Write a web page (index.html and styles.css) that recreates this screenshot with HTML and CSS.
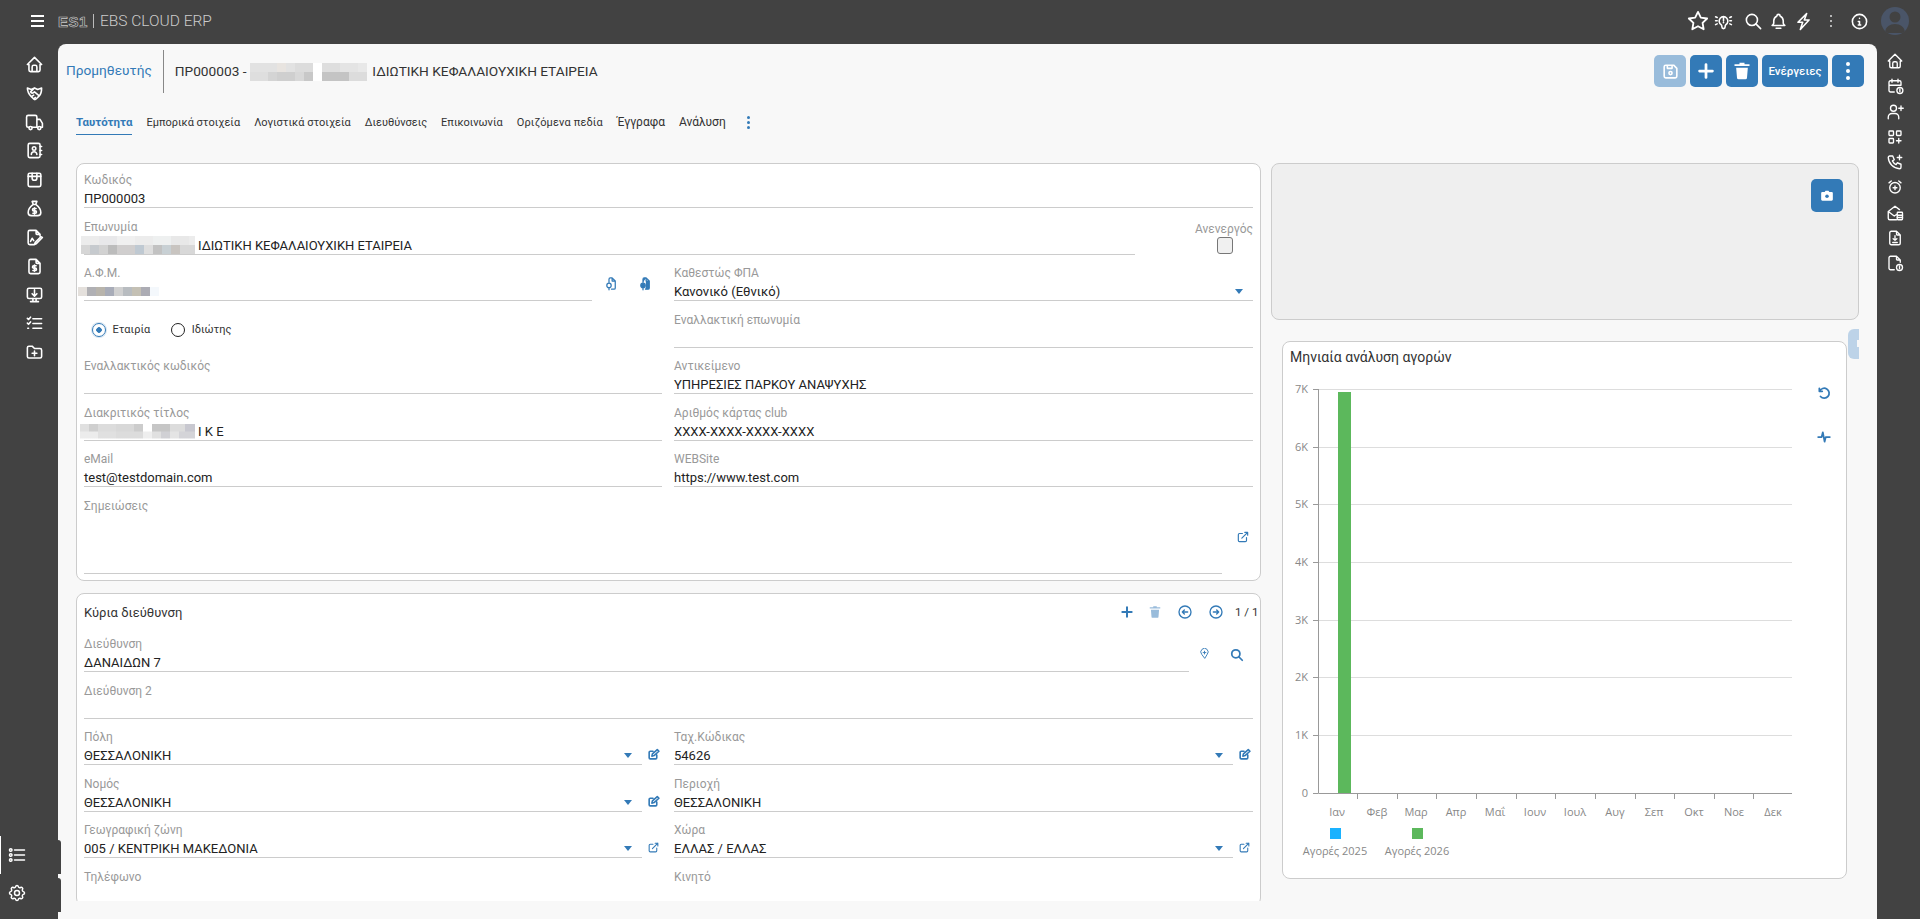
FILE: index.html
```html
<!DOCTYPE html>
<html lang="el">

<head>
    <meta charset="UTF-8">
    <title>Προμηθευτής</title>
    <link rel="stylesheet" href="styles.css">
</head>

<body>
    <svg class="sprite" width="0" height="0">
        <symbol id="i-home" viewBox="0 0 24 24"><path d="M5 12H3l9-9 9 9h-2M5 12v7a2 2 0 0 0 2 2h10a2 2 0 0 0 2-2v-7M9 21v-6a2 2 0 0 1 2-2h2a2 2 0 0 1 2 2v6"/></symbol>
        <symbol id="i-shake" viewBox="0 0 24 24"><path d="M3 5l5 2 4-2 4 2 5-2M3 5c0 5 2 8 5 11l3 3c1 1 2 1 3 0l4-4M12 5L7 10c1 2 3 2 5 0l6 5c2-2 3-5 3-10M8 16l3-2M11 19l2-2"/></symbol>
        <symbol id="i-truck" viewBox="0 0 24 24"><path d="M5 18H4a2 2 0 0 1-2-2V5a2 2 0 0 1 2-2h9a2 2 0 0 1 2 2v13H9M15 8h4l3 5v5h-2M15 18h1"/><circle cx="7" cy="19" r="2"/><circle cx="18" cy="19" r="2"/></symbol>
        <symbol id="i-contact" viewBox="0 0 24 24"><rect x="4" y="3" width="15" height="18" rx="2"/><circle cx="11.5" cy="9.5" r="2.2"/><path d="M8 17a3.5 3.5 0 0 1 7 0M19 7h2M19 12h2M19 17h2"/></symbol>
        <symbol id="i-store" viewBox="0 0 24 24"><rect x="4" y="4" width="16" height="17" rx="2"/><path d="M4 8h16M9 4v6a3 3 0 0 0 6 0V4"/></symbol>
        <symbol id="i-money" viewBox="0 0 24 24"><path d="M9 3h6l-1.500 4h-3zM10 7c-4 3-6 7-6 10a4 4 0 0 0 4 4h8a4 4 0 0 0 4-4c0-3-2-7-6-10M14 12h-3a1.500 1.500 0 0 0 0 3h2a1.500 1.500 0 0 1 0 3h-3M12 11v8"/></symbol>
        <symbol id="i-filesign" viewBox="0 0 24 24"><path d="M14 3v4a1 1 0 0 0 1 1h4M11 21H6a2 2 0 0 1-2-2V5a2 2 0 0 1 2-2h8l5 5v2M22 12l-8 8-2 1 1-3 7-7zM7 17l2-4 2 3"/></symbol>
        <symbol id="i-filedollar" viewBox="0 0 24 24"><path d="M14 3v4a1 1 0 0 0 1 1h4M17 21H7a2 2 0 0 1-2-2V5a2 2 0 0 1 2-2h7l5 5v11a2 2 0 0 1-2 2zM14 11h-3a1.200 1.200 0 0 0 0 3h2a1.200 1.200 0 0 1 0 3h-3M12 10v8"/></symbol>
        <symbol id="i-monitor" viewBox="0 0 24 24"><rect x="3" y="4" width="18" height="13" rx="2"/><path d="M7 21h10M10 17v4M14 17v4M12 6v8M9 11l3 3 3-3"/></symbol>
        <symbol id="i-checks" viewBox="0 0 24 24"><path d="M3 5.500l1.500 1.500L7 4M3 11.500L4.500 13 7 10M3.500 18h1M10 6h11M10 12h11M10 18h11"/></symbol>
        <symbol id="i-folder" viewBox="0 0 24 24"><path d="M5 4h4l3 3h7a2 2 0 0 1 2 2v8a2 2 0 0 1-2 2H5a2 2 0 0 1-2-2V6a2 2 0 0 1 2-2zM12 10v6M9 13h6"/></symbol>
        <symbol id="i-list" viewBox="0 0 24 24"><path d="M9 6h12M9 12h12M9 18h12"/><circle cx="4.500" cy="6" r="1.500"/><circle cx="4.500" cy="12" r="1.500"/><circle cx="4.500" cy="18" r="1.500"/></symbol>
        <symbol id="i-gear" viewBox="0 0 24 24"><path d="M10.325 4.317c.426-1.756 2.924-1.756 3.350 0a1.724 1.724 0 0 0 2.573 1.066c1.543-.94 3.310.826 2.370 2.370a1.724 1.724 0 0 0 1.065 2.572c1.756.426 1.756 2.924 0 3.350a1.724 1.724 0 0 0-1.066 2.573c.94 1.543-.826 3.310-2.370 2.370a1.724 1.724 0 0 0-2.572 1.065c-.426 1.756-2.924 1.756-3.350 0a1.724 1.724 0 0 0-2.573-1.066c-1.543.94-3.310-.826-2.370-2.370a1.724 1.724 0 0 0-1.065-2.572c-1.756-.426-1.756-2.924 0-3.350a1.724 1.724 0 0 0 1.066-2.573c-.94-1.543.826-3.310 2.370-2.370 1 .608 2.296.07 2.572-1.065z"/><circle cx="12" cy="12" r="3"/></symbol>

        <symbol id="i-calplus" viewBox="0 0 24 24"><path d="M11 20H6a2 2 0 0 1-2-2V7a2 2 0 0 1 2-2h12a2 2 0 0 1 2 2v4M16 3v4M8 3v4M4 11h16M18.500 16v3.500"/><circle cx="18.500" cy="18" r="4"/></symbol>
        <symbol id="i-userplus" viewBox="0 0 24 24"><circle cx="10" cy="7" r="4"/><path d="M3 21v-2a5 5 0 0 1 5-5h4a5 5 0 0 1 5 5v2M17 7h6M20 4v6"/></symbol>
        <symbol id="i-apps" viewBox="0 0 24 24"><rect x="4" y="4" width="6" height="6" rx="1"/><rect x="14" y="4" width="6" height="6" rx="1"/><rect x="4" y="14" width="6" height="6" rx="1"/><path d="M14 17h6M17 14v6"/></symbol>
        <symbol id="i-phoneplus" viewBox="0 0 24 24"><path d="M5 4h4l2 5-2.500 1.500a11 11 0 0 0 5 5L15 13l5 2v4a2 2 0 0 1-2 2A16 16 0 0 1 3 6a2 2 0 0 1 2-2zM15 6h6M18 3v6"/></symbol>
        <symbol id="i-alarm" viewBox="0 0 24 24"><circle cx="12" cy="13" r="7"/><path d="M7 4L4 6.500M17 4l3 2.500M9.500 13h5M12 10.500v5"/></symbol>
        <symbol id="i-mailbox" viewBox="0 0 24 24"><path d="M3 10l9-7 6 4.500M3 10v9a2 2 0 0 0 2 2h9M3 10l8 6 3-2"/><rect x="15" y="11" width="7" height="10" rx="1"/><path d="M15 15h7M15 18h7"/></symbol>
        <symbol id="i-filedown" viewBox="0 0 24 24"><path d="M14 3v4a1 1 0 0 0 1 1h4M17 21H7a2 2 0 0 1-2-2V5a2 2 0 0 1 2-2h7l5 5v11a2 2 0 0 1-2 2zM12 9v6M9.500 13l2.500 2 2.500-2M9 18h6"/></symbol>
        <symbol id="i-fileinfo" viewBox="0 0 24 24"><path d="M14 3v4a1 1 0 0 0 1 1h4M11 21H6a2 2 0 0 1-2-2V5a2 2 0 0 1 2-2h8l5 5v3M18 16v3.500"/><circle cx="18" cy="18" r="4"/></symbol>

        <symbol id="i-star" viewBox="0 0 24 24"><path d="M12 17.750l-6.172 3.245 1.179-6.873-5-4.867 6.900-1 3.086-6.253 3.086 6.253 6.900 1-5 4.867 1.179 6.873z"/></symbol>
        <symbol id="i-bulb" viewBox="0 0 24 24"><path d="M9 16a5.500 5.500 0 1 1 6 0c-.6.500-1 1.500-1 3a2 2 0 0 1-4 0c0-1.500-.4-2.500-1-3zM12 7v4M12 13v.5M2 6l2 1M2 11h2M2 16l2-1M22 6l-2 1M22 11h-2M22 16l-2-1"/></symbol>
        <symbol id="i-search" viewBox="0 0 24 24"><circle cx="10" cy="10" r="7"/><path d="M21 21l-6-6"/></symbol>
        <symbol id="i-bell" viewBox="0 0 24 24"><path d="M10 5a2 2 0 1 1 4 0 7 7 0 0 1 4 6v3a4 4 0 0 0 2 3H4a4 4 0 0 0 2-3v-3a7 7 0 0 1 4-6M9 20.500h6"/></symbol>
        <symbol id="i-bolt" viewBox="0 0 24 24"><path d="M16 2L5 13h6l-3 9 11-12h-6z"/></symbol>
        <symbol id="i-info" viewBox="0 0 24 24"><circle cx="12" cy="12" r="9"/><path d="M12 8h.01M10.500 12H12v4.500M10.500 16.500h3"/></symbol>

        <symbol id="i-save" viewBox="0 0 24 24"><path d="M6 4h10l4 4v10a2 2 0 0 1-2 2H6a2 2 0 0 1-2-2V6a2 2 0 0 1 2-2zM14 4v4H8V4"/><circle cx="12" cy="14" r="2"/></symbol>
        <symbol id="i-plus" viewBox="0 0 24 24"><path d="M12 5v14M5 12h14"/></symbol>
        <symbol id="i-filekey" viewBox="0 0 24 24"><path d="M13 3h-3a2 2 0 0 0-2 2v5M13 3l5 5v11a2 2 0 0 1-2 2h-4M13 3v5h5"/><circle cx="8" cy="15" r="3.500"/><path d="M8 18.500V22"/></symbol>
        <symbol id="i-external" viewBox="0 0 24 24"><path d="M11 6H6a2 2 0 0 0-2 2v10a2 2 0 0 0 2 2h10a2 2 0 0 0 2-2v-5M10 14L20 4M15 4h5v5"/></symbol>
        <symbol id="i-edit" viewBox="0 0 24 24"><path d="M11 6H6a2 2 0 0 0-2 2v10a2 2 0 0 0 2 2h10a2 2 0 0 0 2-2v-5M9 15l1-4 9-8 3 3-9 8z"/></symbol>
        <symbol id="i-arrowl" viewBox="0 0 24 24"><circle cx="12" cy="12" r="9"/><path d="M8 12h8M8 12l3-3M8 12l3 3"/></symbol>
        <symbol id="i-arrowr" viewBox="0 0 24 24"><circle cx="12" cy="12" r="9"/><path d="M16 12H8M16 12l-3-3M16 12l-3 3"/></symbol>
        <symbol id="i-pin" viewBox="0 0 24 24"><path d="M12 22l-6-8a8 8 0 1 1 12 0z"/><path d="M12 7v6M9 10h6"/></symbol>
        <symbol id="i-undo" viewBox="0 0 24 24"><path d="M4 4v5h5M4.500 9A8.500 8.500 0 1 1 6 18"/></symbol>
        <symbol id="i-pulse" viewBox="0 0 24 24"><path d="M2 12h6l2-8 3 16 2-8h7"/></symbol>
    </svg>

    <header class="topbar">
        <div class="burger"><span></span><span></span><span></span></div>
        <span class="logo">ES1</span>
        <span class="brand">EBS CLOUD ERP</span>
        <div class="top-icons">
            <span class="slot"><svg class="ic ic-22"><use href="#i-star"/></svg></span>
            <span class="slot near"><svg class="ic"><use href="#i-bulb"/></svg></span>
            <span class="slot far"><svg class="ic"><use href="#i-search"/></svg></span>
            <span class="slot near"><svg class="ic"><use href="#i-bell"/></svg></span>
            <span class="slot near"><svg class="ic"><use href="#i-bolt"/></svg></span>
            <span class="slot mid"><span class="dots"><i></i><i></i><i></i></span></span>
            <span class="slot mid"><svg class="ic"><use href="#i-info"/></svg></span>
            <span class="avatar">
                <svg viewBox="0 0 28 28" width="28" height="28"><circle cx="14" cy="10" r="5.500"/><path d="M4 26c0-6 5-9 10-9s10 3 10 9z"/></svg>
            </span>
        </div>
    </header>

    <div class="shell">
        <nav class="sidebar">
            <div class="side-top">
                <svg class="ic"><use href="#i-home"/></svg>
                <svg class="ic"><use href="#i-shake"/></svg>
                <svg class="ic"><use href="#i-truck"/></svg>
                <svg class="ic"><use href="#i-contact"/></svg>
                <svg class="ic"><use href="#i-store"/></svg>
                <svg class="ic"><use href="#i-money"/></svg>
                <svg class="ic"><use href="#i-filesign"/></svg>
                <svg class="ic"><use href="#i-filedollar"/></svg>
                <svg class="ic"><use href="#i-monitor"/></svg>
                <svg class="ic"><use href="#i-checks"/></svg>
                <svg class="ic"><use href="#i-folder"/></svg>
            </div>
            <div class="side-bottom">
                <span class="side-item active"><svg class="ic"><use href="#i-list"/></svg></span>
                <span class="side-item"><svg class="ic"><use href="#i-gear"/></svg></span>
            </div>
        </nav>

        <main class="panel">
            <div class="page-head">
                <a class="crumb">Προμηθευτής</a>
                <h1 class="page-title">ΠΡ000003 - <span class="mosaic m-title"></span> ΙΔΙΩΤΙΚΗ ΚΕΦΑΛΑΙΟΥΧΙΚΗ ΕΤΑΙΡΕΙΑ</h1>
                <div class="actions">
                    <button class="btn off"><svg class="ic"><use href="#i-save"/></svg></button>
                    <button class="btn"><svg class="ic ic-22 thick"><use href="#i-plus"/></svg></button>
                    <button class="btn">
                        <svg class="trash-fill" viewBox="0 0 24 24" width="20" height="20"><path d="M9 2h6v2h6v2H3V4h6zM5 8h14l-1 12a2 2 0 0 1-2 2H8a2 2 0 0 1-2-2z"/></svg>
                    </button>
                    <button class="btn label">Ενέργειες</button>
                    <button class="btn"><span class="dots big"><i></i><i></i><i></i></span></button>
                </div>
            </div>

            <div class="tabs">
                <span class="tab active">Ταυτότητα</span>
                <span class="tab">Εμπορικά στοιχεία</span>
                <span class="tab">Λογιστικά στοιχεία</span>
                <span class="tab">Διευθύνσεις</span>
                <span class="tab">Επικοινωνία</span>
                <span class="tab loose">Οριζόμενα πεδία</span>
                <span class="tab big">Έγγραφα</span>
                <span class="tab big">Ανάλυση</span>
                <span class="dots blue"><i></i><i></i><i></i></span>
            </div>

            <div class="content">
                <div class="col-left">
                    <section class="card form-card">
                        <div class="form-grid">
                            <div class="field span2">
                                <label>Κωδικός</label>
                                <div class="value">ΠΡ000003</div>
                            </div>
                            <div class="row span2">
                                <div class="field grow">
                                    <label>Επωνυμία</label>
                                    <div class="value"><span class="mosaic m-name"></span>ΙΔΙΩΤΙΚΗ ΚΕΦΑΛΑΙΟΥΧΙΚΗ ΕΤΑΙΡΕΙΑ</div>
                                </div>
                                <div class="inactive">
                                    <label>Ανενεργός</label>
                                    <span class="checkbox"></span>
                                </div>
                            </div>
                            <div class="row">
                                <div class="field grow">
                                    <label>Α.Φ.Μ.</label>
                                    <div class="value"><span class="mosaic m-afm"></span></div>
                                </div>
                                <div class="afm-tools">
                                    <svg class="ic blue-ic ic-15"><use href="#i-filekey"/></svg>
                                    <svg class="ic blue-ic ic-15 filled"><use href="#i-filekey"/></svg>
                                </div>
                            </div>
                            <div class="field select">
                                <label>Καθεστώς ΦΠΑ</label>
                                <div class="value">Κανονικό (Εθνικό)</div>
                                <i class="caret"></i>
                            </div>
                            <div class="radios">
                                <span class="radio on">Εταιρία</span>
                                <span class="radio">Ιδιώτης</span>
                            </div>
                            <div class="field">
                                <label>Εναλλακτική επωνυμία</label>
                                <div class="value"></div>
                            </div>
                            <div class="field">
                                <label>Εναλλακτικός κωδικός</label>
                                <div class="value"></div>
                            </div>
                            <div class="field">
                                <label>Αντικείμενο</label>
                                <div class="value">ΥΠΗΡΕΣΙΕΣ ΠΑΡΚΟΥ ΑΝΑΨΥΧΗΣ</div>
                            </div>
                            <div class="field">
                                <label>Διακριτικός τίτλος</label>
                                <div class="value"><span class="mosaic m-title2"></span>Ι Κ Ε</div>
                            </div>
                            <div class="field">
                                <label>Αριθμός κάρτας club</label>
                                <div class="value">XXXX-XXXX-XXXX-XXXX</div>
                            </div>
                            <div class="field">
                                <label>eMail</label>
                                <div class="value">test@testdomain.com</div>
                            </div>
                            <div class="field">
                                <label>WEBSite</label>
                                <div class="value">https://www.test.com</div>
                            </div>
                            <div class="row span2">
                                <div class="field grow notes">
                                    <label>Σημειώσεις</label>
                                </div>
                                <div class="notes-tool">
                                    <svg class="ic blue-ic ic-14"><use href="#i-external"/></svg>
                                </div>
                            </div>
                        </div>
                    </section>

                    <section class="card address-card">
                        <div class="card-head">
                            <h2>Κύρια διεύθυνση</h2>
                            <div class="pager">
                                <svg class="ic blue-ic ic-16 thick pg-plus"><use href="#i-plus"/></svg>
                                <svg class="trash-fill pale" viewBox="0 0 24 24" width="14" height="14"><path d="M9 2h6v2h6v2H3V4h6zM5 8h14l-1 12a2 2 0 0 1-2 2H8a2 2 0 0 1-2-2z"/></svg>
                                <svg class="ic blue-ic ic-16"><use href="#i-arrowl"/></svg>
                                <svg class="ic blue-ic ic-16"><use href="#i-arrowr"/></svg>
                                <span class="count">1 / 1</span>
                            </div>
                        </div>
                        <div class="form-grid">
                            <div class="row span2">
                                <div class="field grow">
                                    <label>Διεύθυνση</label>
                                    <div class="value">ΔΑΝΑΙΔΩΝ 7</div>
                                </div>
                                <div class="addr-tools">
                                    <svg class="ic blue-ic ic-10"><use href="#i-pin"/></svg>
                                    <svg class="ic blue-ic ic-14 thick"><use href="#i-search"/></svg>
                                </div>
                            </div>
                            <div class="field span2">
                                <label>Διεύθυνση 2</label>
                                <div class="value"></div>
                            </div>
                            <div class="row">
                                <div class="field grow select">
                                    <label>Πόλη</label>
                                    <div class="value">ΘΕΣΣΑΛΟΝΙΚΗ</div>
                                    <i class="caret"></i>
                                </div>
                                <svg class="ic blue-ic ic-13 row-tool thick"><use href="#i-edit"/></svg>
                            </div>
                            <div class="row">
                                <div class="field grow select">
                                    <label>Ταχ.Κώδικας</label>
                                    <div class="value">54626</div>
                                    <i class="caret"></i>
                                </div>
                                <svg class="ic blue-ic ic-13 row-tool thick"><use href="#i-edit"/></svg>
                            </div>
                            <div class="row">
                                <div class="field grow select">
                                    <label>Νομός</label>
                                    <div class="value">ΘΕΣΣΑΛΟΝΙΚΗ</div>
                                    <i class="caret"></i>
                                </div>
                                <svg class="ic blue-ic ic-13 row-tool thick"><use href="#i-edit"/></svg>
                            </div>
                            <div class="field">
                                <label>Περιοχή</label>
                                <div class="value">ΘΕΣΣΑΛΟΝΙΚΗ</div>
                            </div>
                            <div class="row">
                                <div class="field grow select">
                                    <label>Γεωγραφική ζώνη</label>
                                    <div class="value">005 / ΚΕΝΤΡΙΚΗ ΜΑΚΕΔΟΝΙΑ</div>
                                    <i class="caret"></i>
                                </div>
                                <svg class="ic blue-ic ic-13 row-tool"><use href="#i-external"/></svg>
                            </div>
                            <div class="row">
                                <div class="field grow select">
                                    <label>Χώρα</label>
                                    <div class="value">ΕΛΛΑΣ / ΕΛΛΑΣ</div>
                                    <i class="caret"></i>
                                </div>
                                <svg class="ic blue-ic ic-13 row-tool"><use href="#i-external"/></svg>
                            </div>
                            <div class="field">
                                <label>Τηλέφωνο</label>
                                <div class="value"></div>
                            </div>
                            <div class="field">
                                <label>Κινητό</label>
                                <div class="value"></div>
                            </div>
                        </div>
                    </section>
                </div>

                <div class="col-right">
                    <section class="card photo-card">
                        <button class="btn cam">
                            <svg viewBox="0 0 24 24" width="14" height="14" class="cam-ic"><path d="M8 5l1.500-2h5L16 5h4a2 2 0 0 1 2 2v11a2 2 0 0 1-2 2H4a2 2 0 0 1-2-2V7a2 2 0 0 1 2-2z"/><circle cx="12" cy="12.500" r="3" fill="#337ab7"/></svg>
                        </button>
                    </section>

                    <section class="card chart-card">
                        <h2>Μηνιαία ανάλυση αγορών</h2>
                        <svg class="chart" viewBox="0 0 563 506" width="563" height="506">
                            <g class="grid">
                                <line x1="35" x2="509" y1="17.500" y2="17.500"/>
                                <line x1="35" x2="509" y1="75.500" y2="75.500"/>
                                <line x1="35" x2="509" y1="132.500" y2="132.500"/>
                                <line x1="35" x2="509" y1="190.500" y2="190.500"/>
                                <line x1="35" x2="509" y1="248.500" y2="248.500"/>
                                <line x1="35" x2="509" y1="305.500" y2="305.500"/>
                                <line x1="35" x2="509" y1="363.500" y2="363.500"/>
                            </g>
                            <rect class="bar" x="55" y="20" width="13" height="401"/>
                            <g class="axis">
                                <path d="M35.500 17v404.500H509"/>
                                <path d="M30 17.500h5M30 75.500h5M30 132.500h5M30 190.500h5M30 248.500h5M30 305.500h5M30 363.500h5M30 421.500h5"/>
                                <path d="M74.500 421v6M114.500 421v6M153.500 421v6M193.500 421v6M233.500 421v6M272.500 421v6M312.500 421v6M352.500 421v6M391.500 421v6M431.500 421v6M470.500 421v6"/>
                            </g>
                            <g class="y-labels">
                                <text x="25" y="21">7K</text>
                                <text x="25" y="79">6K</text>
                                <text x="25" y="136">5K</text>
                                <text x="25" y="194">4K</text>
                                <text x="25" y="252">3K</text>
                                <text x="25" y="309">2K</text>
                                <text x="25" y="367">1K</text>
                                <text x="25" y="425">0</text>
                            </g>
                            <g class="x-labels">
                                <text x="54" y="444">Ιαν</text>
                                <text x="94" y="444">Φεβ</text>
                                <text x="133" y="444">Μαρ</text>
                                <text x="173" y="444">Απρ</text>
                                <text x="212" y="444">Μαΐ</text>
                                <text x="252" y="444">Ιουν</text>
                                <text x="292" y="444">Ιουλ</text>
                                <text x="332" y="444">Αυγ</text>
                                <text x="371" y="444">Σεπ</text>
                                <text x="411" y="444">Οκτ</text>
                                <text x="451" y="444">Νοε</text>
                                <text x="490" y="444">Δεκ</text>
                                <text x="52" y="483">Αγορές 2025</text>
                                <text x="134" y="483">Αγορές 2026</text>
                            </g>
                            <rect x="47" y="456" width="11" height="11" fill="#1ab2ff"/>
                            <rect x="129" y="456" width="11" height="11" fill="#5cb85c"/>
                        </svg>
                        <div class="chart-tools">
                            <svg class="ic blue-ic ic-14 thick"><use href="#i-undo"/></svg>
                            <svg class="ic blue-ic ic-14 thick"><use href="#i-pulse"/></svg>
                        </div>
                    </section>
                    <span class="edge-tab"></span>
                </div>
            </div>
        </main>

        <aside class="rightbar">
            <svg class="ic"><use href="#i-home"/></svg>
            <svg class="ic"><use href="#i-calplus"/></svg>
            <svg class="ic"><use href="#i-userplus"/></svg>
            <svg class="ic"><use href="#i-apps"/></svg>
            <svg class="ic"><use href="#i-phoneplus"/></svg>
            <svg class="ic"><use href="#i-alarm"/></svg>
            <svg class="ic"><use href="#i-mailbox"/></svg>
            <svg class="ic"><use href="#i-filedown"/></svg>
            <svg class="ic"><use href="#i-fileinfo"/></svg>
        </aside>
    </div>
</body>

</html>
```

FILE: styles.css
```css
* {
    box-sizing: border-box;
}

body {
    margin: 0;
    height: 919px;
    overflow: hidden;
    background: #424242;
    font-family: Roboto, "Noto Sans", sans-serif;
    color: #222;
}

h1,
h2 {
    margin: 0;
    font-weight: 400;
}

.sprite {
    position: absolute;
}

.ic {
    width: 19px;
    height: 19px;
    fill: none;
    stroke: #fff;
    stroke-width: 2;
    stroke-linecap: round;
    stroke-linejoin: round;
    flex: none;
}

.ic-22 {
    width: 22px;
    height: 22px;
}

.ic-16 {
    width: 16px;
    height: 16px;
}

.ic-15 {
    width: 15px;
    height: 15px;
}

.ic-14 {
    width: 14px;
    height: 14px;
}

.ic-13 {
    width: 13px;
    height: 13px;
}

.ic-10 {
    width: 11px;
    height: 11px;
}

.thick {
    stroke-width: 3;
}

.blue-ic {
    stroke: #337ab7;
}

.filled {
    fill: #337ab7;
}

/* top bar */
.topbar {
    display: flex;
    align-items: center;
    height: 44px;
    padding: 0 7px 2px 31px;
    color: #ddd;
}

.burger {
    width: 13px;
    display: flex;
    flex-direction: column;
    gap: 3px;
    margin-right: 14px;
}

.burger span {
    height: 2px;
    background: #fff;
}

.logo {
    font-family: "Liberation Sans", sans-serif;
    font-weight: 700;
    font-size: 15px;
    letter-spacing: 0.5px;
    color: transparent;
    -webkit-text-stroke: 0.6px #ccc;
    width: 30px;
    margin-right: 5px;
}

.brand {
    border-left: 1px solid #bbb;
    padding-left: 6px;
    font-weight: 300;
    font-size: 15.500px;
    line-height: 14px;
    color: #ccc;
    white-space: nowrap;
}

.top-icons {
    margin-left: auto;
    display: flex;
    align-items: center;
}

.slot {
    width: 20px;
    display: flex;
    justify-content: center;
}

.slot.near {
    margin-left: 5px;
}

.slot.mid {
    margin-left: 8px;
}

.slot.far {
    margin-left: 10px;
}

.avatar {
    width: 28px;
    height: 28px;
    margin: 0 4px 0 12px;
    border-radius: 50%;
    background: #4a5568;
    overflow: hidden;
    display: block;
}

.avatar svg {
    fill: #424242;
    display: block;
}

.dots {
    display: inline-flex;
    flex-direction: column;
    gap: 3px;
}

.dots i {
    width: 2px;
    height: 2px;
    background: #ddd;
    border-radius: 50%;
}

.dots.big {
    gap: 3px;
}

.dots.big i {
    width: 4px;
    height: 4px;
    background: #fff;
}

.dots.blue {
    margin-left: 8px;
    gap: 2px;
}

.dots.blue i {
    width: 3px;
    height: 3px;
    background: #337ab7;
}

/* shell */
.shell {
    display: flex;
    height: 875px;
}

.sidebar {
    width: 58px;
    flex: none;
    display: flex;
    flex-direction: column;
    justify-content: space-between;
    position: relative;
    z-index: 1;
}

.side-top {
    display: flex;
    flex-direction: column;
    align-items: center;
    gap: 9.800px;
    padding-top: 11px;
    padding-left: 10px;
}

.side-bottom {
    display: flex;
    flex-direction: column;
    margin-bottom: 7px;
}

.side-item {
    position: relative;
    display: flex;
    align-items: center;
    padding-left: 7px;
    height: 38px;
}

.side-item .ic {
    width: 20px;
    height: 20px;
    stroke-width: 1.800;
}

.side-item.active {
    border-left: 1px solid #fff;
    padding-left: 6px;
}

/* small ears of the bottom menu, they stick out over the panel */
.side-item::after {
    content: '';
    position: absolute;
    right: -3px;
    top: 4px;
    bottom: 0;
    width: 3px;
    background: #424242;
    border-top-right-radius: 3px;
}

.rightbar {
    width: 43px;
    flex: none;
    display: flex;
    flex-direction: column;
    align-items: center;
    gap: 7.300px;
    padding: 8px 7px 0 0;
}

.rightbar .ic {
    width: 18px;
    height: 18px;
    stroke-width: 1.800;
}

.panel {
    flex: 1;
    min-width: 0;
    background: #f8f8f8;
    border-radius: 8px 8px 0 0;
    padding: 6px 18px 0;
    display: flex;
    flex-direction: column;
}

.page-head {
    display: flex;
    height: 43px;
    margin-left: -10px;
    margin-right: -5px;
}

.crumb {
    color: #337ab7;
    font-size: 13.700px;
    line-height: 41px;
    height: 43px;
    padding-right: 11px;
    border-right: 1px solid #888;
}

.page-title {
    font-size: 13.700px;
    line-height: 41px;
    margin-left: 11px;
    color: #333;
    display: flex;
    align-items: center;
    white-space: pre;
}

.page-title .mosaic {
    margin-right: 2px;
}

.actions {
    margin-left: auto;
    display: flex;
    gap: 4px;
    padding-top: 5px;
}

.btn {
    width: 32px;
    height: 32px;
    border: 0;
    border-radius: 5px;
    padding: 0;
    background: #337ab7;
    color: #fff;
    display: flex;
    align-items: center;
    justify-content: center;
    font-family: inherit;
    font-size: 11.500px;
    font-weight: 500;
}

.btn.off {
    background: #99bcdb;
}

.btn.label {
    width: 66px;
}

.trash-fill {
    fill: #fff;
}

.trash-fill.pale {
    fill: #99bcdb;
}

/* tabs */
.tabs {
    display: flex;
    align-items: flex-start;
    gap: 14px;
    height: 24px;
    margin-top: 18px;
    font-size: 11px;
    color: #333;
}

.tab {
    height: 24px;
    line-height: 23px;
    white-space: nowrap;
}

.tab.loose {
    letter-spacing: 0.15px;
}

.tab.big {
    font-size: 12px;
}

.tab.active {
    color: #337ab7;
    font-size: 11.500px;
    font-weight: 700;
    border-bottom: 1px solid #337ab7;
}

.tabs .dots {
    margin-top: 5px;
    margin-left: 7px;
}

/* main area */
.content {
    margin-top: 28px;
    display: flex;
    gap: 10px;
    height: 738px;
    overflow: hidden;
}

.col-left {
    width: 1185px;
    flex: none;
}

.col-right {
    flex: 1;
    min-width: 0;
    position: relative;
}

.card {
    background: #fff;
    border: 1px solid #ccc;
    border-radius: 8px;
}

.form-card {
    height: 418px;
    padding: 8px 7px 7px;
    margin-bottom: 12px;
}

.address-card {
    padding: 0 7px;
}

.form-grid {
    display: grid;
    grid-template-columns: 578px 579px;
    grid-auto-rows: 36px;
    column-gap: 12px;
    row-gap: 10.500px;
}

.span2 {
    grid-column: span 2;
}

.row {
    display: flex;
    min-width: 0;
}

.grow {
    flex: 1;
    min-width: 0;
}

.field {
    position: relative;
    border-bottom: 1px solid #ccc;
    height: 36px;
}

.field label,
.inactive label {
    display: block;
    font-size: 12px;
    line-height: 16px;
    color: #999;
    white-space: nowrap;
}

.value {
    display: flex;
    align-items: center;
    height: 18px;
    margin-top: 1.500px;
    font-size: 13px;
    color: #222;
    white-space: nowrap;
}

.caret {
    position: absolute;
    right: 10px;
    top: 24px;
    border-left: 4px solid transparent;
    border-right: 4px solid transparent;
    border-top: 5px solid #337ab7;
}

.inactive {
    width: 118px;
    text-align: right;
    display: flex;
    flex-direction: column;
    align-items: flex-end;
    padding-top: 2px;
}

.checkbox {
    width: 16px;
    height: 17px;
    margin-right: 20px;
    background: #f0f0f0;
    border: 1px solid #777;
    border-radius: 3px;
}

.afm-tools {
    width: 70px;
    display: flex;
    align-items: flex-start;
    justify-content: space-between;
    padding: 11px 9px 0 12px;
}

.radios {
    display: flex;
    align-items: center;
    gap: 21px;
    padding-left: 8px;
    font-size: 11px;
    color: #333;
}

.radio {
    display: flex;
    align-items: center;
    gap: 6.500px;
}

.radio::before {
    content: '';
    width: 12px;
    height: 12px;
    border-radius: 50%;
    border: 1.500px solid #222;
    background: #fff;
}

.radio.on::before {
    border-color: #337ab7;
    background: radial-gradient(circle, #337ab7 0 2.500px, #fff 3px);
    box-shadow: 0 0 0 1px #d6e4f0;
}

.notes {
    height: 76.500px;
}

.notes-tool {
    width: 31px;
    padding: 31px 0 0 14px;
}

/* address card */
.card-head {
    display: flex;
    align-items: center;
    height: 36px;
    margin-bottom: 6px;
}

.card-head h2 {
    font-size: 13px;
    color: #333;
}

.pager {
    margin-left: auto;
    display: flex;
    align-items: center;
}

.pager svg {
    margin-right: 15px;
}

.pager .pg-plus {
    margin-right: 13px;
}

.count {
    font-size: 11.500px;
    color: #333;
    margin-left: -4px;
    width: 18px;
    white-space: nowrap;
}

.addr-tools {
    width: 64px;
    display: flex;
    align-items: flex-start;
    padding: 12px 9px 0 10px;
    justify-content: space-between;
}

.row-tool {
    margin: 19px 2px 0 5px;
}

/* right column */
.photo-card {
    height: 157px;
    background: #efefef;
    padding: 15px 15px 0 0;
    display: flex;
    justify-content: flex-end;
}

.btn.cam {
    width: 32px;
    height: 33px;
}

.cam-ic {
    fill: #fff;
}

.chart-card {
    position: relative;
    height: 538px;
    margin: 21px 12px 0 11px;
}

.chart-card h2 {
    font-size: 14px;
    line-height: 30px;
    height: 30px;
    padding-left: 7px;
    color: #333;
}

.chart {
    display: block;
    font-family: "Open Sans", sans-serif;
    font-size: 11px;
}

.grid line {
    stroke: #ddd;
}

.bar {
    fill: #5cb85c;
}

.axis path {
    fill: none;
    stroke: #999;
}

.y-labels text {
    fill: #888;
    text-anchor: end;
}

.x-labels text {
    fill: #888;
    text-anchor: middle;
}

/* the two icons next to the plot lie on top of the chart area */
.chart-tools {
    position: absolute;
    left: 534px;
    top: 44px;
    display: flex;
    flex-direction: column;
    gap: 30px;
}

.edge-tab {
    position: absolute;
    left: 577px;
    top: 166px;
    width: 11px;
    height: 30px;
    background: #bdd3e8;
    border-radius: 6px 0 0 6px;
}

.edge-tab::after {
    content: '';
    position: absolute;
    right: 0;
    top: 11px;
    width: 2px;
    height: 7px;
    background: #f8f8f8;
}

/* pixelated parts of the names */
.mosaic {
    display: inline-block;
    flex: none;
    background-repeat: no-repeat;
    background-size: 100% 50%;
    background-position: top, bottom;
}

.m-title {
    width: 117px;
    height: 18px;
    background-image:
        linear-gradient(90deg, #e2e2e2 0 27px, #e8e4e0 0 36px, #e2e2e2 0 45px, #dcdcdc 0 63px, #fff 0 72px, #dedede 0 90px, #e4e4e4 0 108px, #e8e8e8 0),
        linear-gradient(90deg, #dedede 0 18px, #d4d4d4 0 27px, #cfcfcf 0 45px, #d8d8d8 0 54px, #c8c8c8 0 63px, #fff 0 72px, #c4c4c4 0 99px, #dcdcdc 0);
}

.m-name {
    width: 114px;
    height: 18px;
    margin-left: -3px;
    margin-right: 3px;
    background-image:
        linear-gradient(90deg, #ececec 0 18px, #e8e8ea 0 36px, #f0f0f0 0 54px, #ececec 0 72px, #eef0f0 0 90px, #e8e8e8 0 108px, #ececec 0),
        linear-gradient(90deg, #d6d6d6 0 9px, #c6cace 0 18px, #d2d2d2 0 27px, #bcbcbc 0 36px, #d0cece 0 54px, #bfc9d2 0 63px, #dedede 0 72px, #c2c2c2 0 81px, #c8d0d4 0 90px, #c8c4c0 0 99px, #d8d8d8 0);
}

.m-afm {
    width: 81px;
    height: 9px;
    margin-left: -6px;
    background: linear-gradient(90deg, #e4e0dc 0 9px, #b0b0b4 0 18px, #b8b4ac 0 27px, #a8acb8 0 36px, #d0d0d0 0 45px, #b8bcc0 0 54px, #c4c0b4 0 63px, #acacb4 0 72px, #f4f8fc 0);
}

.m-title2 {
    width: 115px;
    height: 15px;
    margin-left: -4px;
    margin-right: 3px;
    background-image:
        linear-gradient(90deg, #e0e0e0 0 9px, #cfcfcf 0 18px, #dcdcdc 0 36px, #d8d8d8 0 54px, #cccccc 0 63px, #fff 0 72px, #c6c6c6 0 90px, #dcdcdc 0 105px, #c8c8d0 0),
        linear-gradient(90deg, #ececec 0 18px, #e0e0e0 0 36px, #dcdcdc 0 63px, #eeeeee 0 72px, #e0e0e0 0 81px, #d0d0d4 0 90px, #e4e4e4 0 99px, #d4d4d8 0);
}
```
